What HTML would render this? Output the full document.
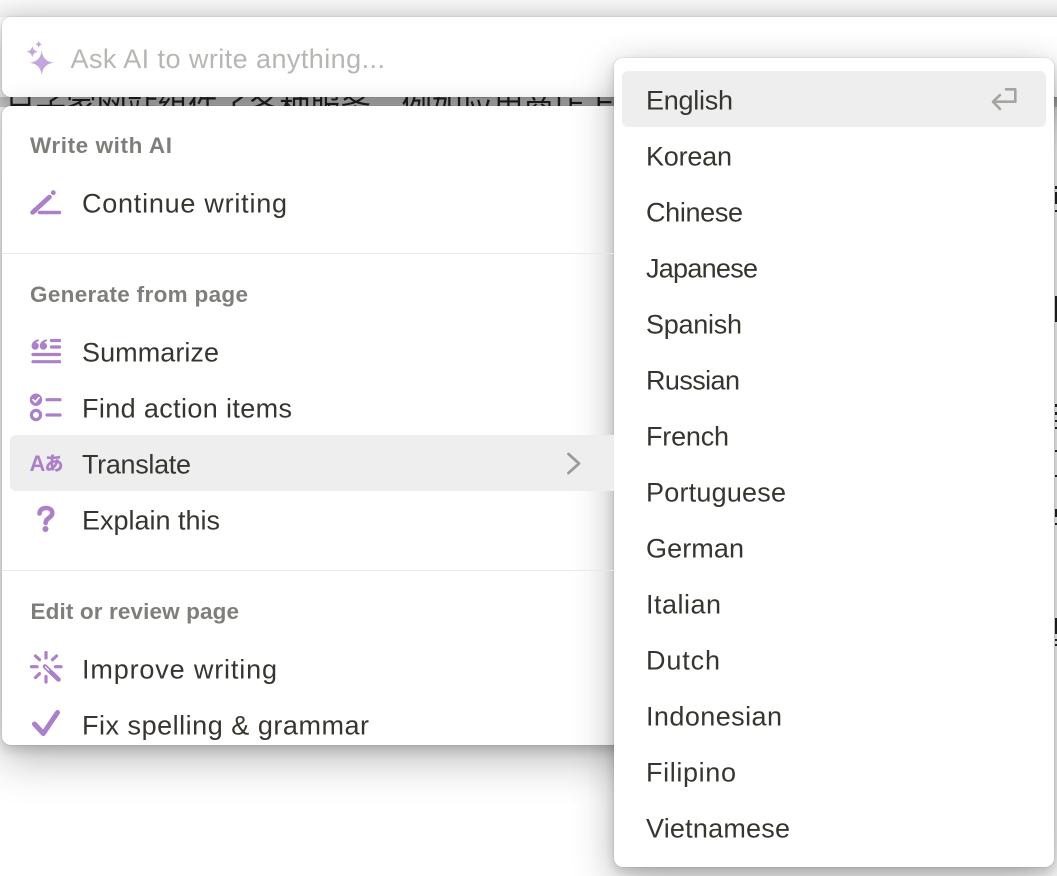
<!DOCTYPE html>
<html>
<head>
<meta charset="utf-8">
<style>
html,body{margin:0;padding:0;width:1057px;height:876px;overflow:hidden;background:#fff}
#top{position:absolute;left:0;top:0;width:1057px;height:17px;background:linear-gradient(#fafafa,#f1f1f1)}
.box{position:absolute;background:#fff;box-shadow:0 0 0 1px rgba(15,15,15,.05),0 5px 10px rgba(15,15,15,.14),0 16px 42px rgba(15,15,15,.26),0 0 30px rgba(15,15,15,.07)}
#bgtext{position:absolute;left:0;top:97px;width:1057px;height:10px;overflow:hidden;background:#d2d2d1}
#bgtext div{position:absolute;left:5px;top:-8px;white-space:nowrap;font:30.5px/36px "Liberation Sans","Noto Sans CJK SC",sans-serif;color:#222}
svg{position:absolute;left:0;top:0}
text{font-family:"Liberation Sans","Noto Sans CJK JP",sans-serif;font-size:27px;fill:#37352f}
.h{font-size:22.5px;font-weight:700;fill:#7f7e7a}
.i{fill:none;stroke:#ab80c8;stroke-linecap:round;stroke-linejoin:round}
</style>
</head>
<body>
<div id="top"></div>
<div id="bgtext"><div>日子家网站组件了各种服务、例如应用商店上</div></div>
<div class="box" style="left:2px;top:17px;width:1100px;height:80px;border-radius:9px"></div>
<svg width="1057" height="876" style="z-index:0">
<g fill="#222">
<rect x="1055" y="186" width="2" height="3"/><rect x="1055" y="192" width="2" height="12"/><rect x="1055" y="210" width="2" height="2"/>
<rect x="1055" y="296" width="2" height="26"/><rect x="1055" y="404" width="2" height="3"/><rect x="1055" y="412" width="2" height="3"/><rect x="1055" y="420" width="2" height="2"/><rect x="1055" y="427" width="2" height="2"/>
<rect x="1055" y="450" width="2" height="2"/><rect x="1055" y="475" width="2" height="2"/><rect x="1055" y="509" width="2" height="8"/><rect x="1055" y="523" width="2" height="2"/>
<rect x="1055" y="618" width="2" height="16"/><rect x="1055" y="639" width="2" height="2"/><rect x="1055" y="644" width="2" height="2"/>
</g>
</svg>
<div class="box" style="left:2px;top:106px;width:700px;height:639px;border-radius:9px"></div>
<div class="box" style="left:614px;top:58px;width:440px;height:809px;border-radius:9px"></div>
<div style="position:absolute;left:10px;top:435px;width:604px;height:56px;background:#eee;border-radius:6px 0 0 6px"></div>
<div style="position:absolute;left:622px;top:71px;width:424px;height:56px;background:#eee;border-radius:6px"></div>
<div style="position:absolute;left:2px;top:253px;width:612px;height:1px;background:#e9e9e8"></div>
<div style="position:absolute;left:2px;top:570px;width:612px;height:1px;background:#e9e9e8"></div>

<svg width="1057" height="876" viewBox="0 0 1057 876">
<!-- placeholder -->
<text x="70.5" y="68" textLength="314.5" style="fill:#b7b6b3">Ask AI to write anything...</text>
<!-- sparkle -->
<g fill="#c2a8da">
<path d="M41.7 50.2Q42.9 61.5 53.7 62.7Q42.9 63.9 41.7 75.2Q40.5 63.9 29.7 62.7Q40.5 61.5 41.7 50.2Z"/>
<path d="M32.3 46Q33 51 38 51.7Q33 52.4 32.3 57.4Q31.6 52.4 26.6 51.7Q31.6 51 32.3 46Z"/>
<path d="M38.7 40.6Q39.2 43.8 42.4 44.3Q39.2 44.8 38.7 48Q38.2 44.8 35 44.3Q38.2 43.8 38.7 40.6Z"/>
</g>
<!-- headers -->
<text class="h" x="30" y="153" textLength="142">Write with AI</text>
<text class="h" x="30" y="302" textLength="218">Generate from page</text>
<text class="h" x="30.5" y="619" textLength="208.5">Edit or review page</text>
<!-- left items -->
<text x="82" y="212.5" textLength="205">Continue writing</text>
<text x="82" y="361.5" textLength="137">Summarize</text>
<text x="82" y="417.5" textLength="210">Find action items</text>
<text x="82" y="473.5" textLength="109">Translate</text>
<text x="82" y="529.5" textLength="138">Explain this</text>
<text x="82" y="678.5" textLength="195">Improve writing</text>
<text x="82" y="734.5" textLength="287">Fix spelling &amp; grammar</text>
<!-- right items -->
<text x="646" y="109.5" textLength="87">English</text>
<text x="646" y="165.5" textLength="86">Korean</text>
<text x="646" y="221.5" textLength="97">Chinese</text>
<text x="646" y="277.5" textLength="112">Japanese</text>
<text x="646" y="333.5" textLength="96">Spanish</text>
<text x="646" y="389.5" textLength="94">Russian</text>
<text x="646" y="445.5" textLength="83">French</text>
<text x="646" y="501.5" textLength="140">Portuguese</text>
<text x="646" y="557.5" textLength="98">German</text>
<text x="646" y="613.5" textLength="75">Italian</text>
<text x="646" y="669.5" textLength="74">Dutch</text>
<text x="646" y="725.5" textLength="136">Indonesian</text>
<text x="646" y="781.5" textLength="90">Filipino</text>
<text x="646" y="837.5" textLength="144">Vietnamese</text>
<!-- pen -->
<path class="i" stroke-width="4.6" stroke-linecap="butt" d="M32.5 212.5L49.5 197"/>
<path d="M31 214.5L33 208.5L37 212.5Z" fill="#ab80c8"/>
<circle cx="53.3" cy="192.7" r="2.4" fill="#ab80c8"/>
<path class="i" stroke-width="3.4" d="M39.5 212.5H59.5"/>
<!-- summarize -->
<g fill="#ab80c8">
<path d="M38.5 339.2C34.5 340 31.6 342.5 31.6 346A3.6 3.6 0 1 0 36.2 342.6C36.5 341.9 37.5 341.3 39 341Z"/>
<path d="M46.7 339.2C42.7 340 39.8 342.5 39.8 346A3.6 3.6 0 1 0 44.4 342.6C44.7 341.9 45.7 341.3 47.2 341Z"/>
</g>
<path class="i" stroke-width="3.2" d="M51.5 340.5H59.5M51.5 347H59.5M33 354.5H59.5M33 361.7H59.5"/>
<!-- action items -->
<circle cx="36" cy="399.7" r="6.2" fill="#ab80c8"/>
<path d="M33 399.8L35.3 402L39 397.6" fill="none" stroke="#fff" stroke-width="1.7" stroke-linecap="round" stroke-linejoin="round"/>
<circle class="i" cx="36" cy="415" r="4.6" stroke-width="3.2"/>
<path class="i" stroke-width="3.2" d="M47 399.7H60M47 415H60"/>
<!-- translate -->
<text x="29.5" y="471" style="font-size:22px;font-weight:700;fill:#ab80c8">A</text>
<text x="44.5" y="470" style="font-size:19px;font-weight:900;fill:#ab80c8;font-family:'Noto Sans CJK JP',sans-serif">あ</text>
<!-- chevron -->
<path d="M568.5 454L579 463.5L568.5 473" fill="none" stroke="#9b9a97" stroke-width="2.8" stroke-linecap="round" stroke-linejoin="round"/>
<!-- question -->
<path class="i" stroke-width="4.6" d="M39.5 513.5C39.8 509.8 42.5 508 46 508C49.8 508 52.3 510 52.3 513C52.3 517.8 45.6 518 45.6 523"/>
<circle cx="45.5" cy="529" r="3" fill="#ab80c8"/>
<!-- improve -->
<path class="i" stroke-width="3.2" d="M46 652.5V658M46 676.5V682M31.5 666.7H37M55.5 666.7H61M35.5 656L39.5 659.7M56.5 656L52.5 659.7M35.5 677.5L39.5 673.7"/>
<path class="i" stroke-width="4.6" d="M45 666.5L58.5 679.5"/>
<path d="M45.3 666.8L49 670.4" stroke="#fff" stroke-width="1.1" stroke-linecap="round" fill="none"/>
<!-- check -->
<path class="i" stroke-width="5" d="M34.5 724L43.3 733.5L57.5 712.5"/>
<!-- enter -->
<path d="M1006 89.3H1015.3V101.7H993.5M1000 95L993 101.7L1000 109" fill="none" stroke="#a5a4a1" stroke-width="2.6" stroke-linecap="round" stroke-linejoin="round"/>
</svg>
</body>
</html>
